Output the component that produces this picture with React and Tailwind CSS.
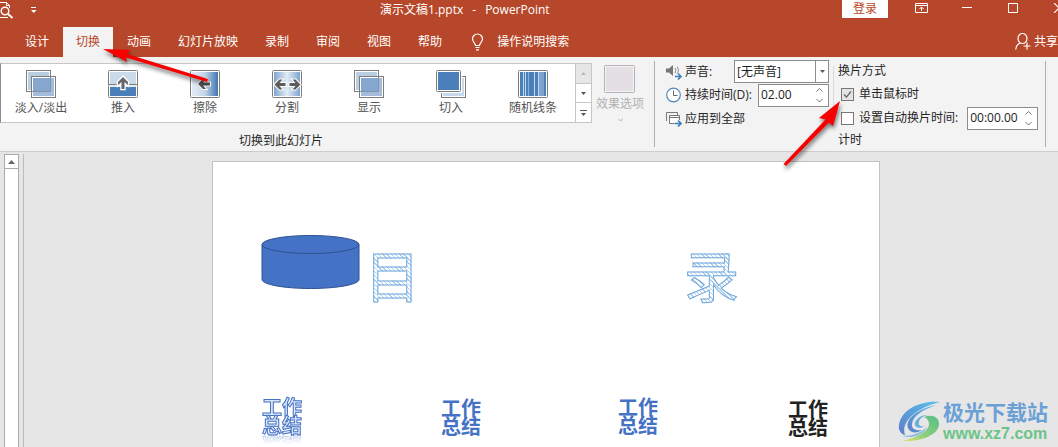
import React from "react";

const tabs = ["设计", "切换", "动画", "幻灯片放映", "录制", "审阅", "视图", "帮助"];

function Frame({ x = 1, fill = "#c9daea", children }) {
  return (
    <svg width="32" height="29" viewBox="0 0 32 29" aria-hidden="true">
      <rect x={x + 0.5} y="0.5" width="29" height="27" rx="1" fill="#fff" stroke="#7c7c7c" />
      <rect x={x + 2} y="2" width="26" height="24" fill={fill} />
      {children}
    </svg>
  );
}

function Overlap() {
  return (
    <svg width="32" height="29" viewBox="0 0 32 29" aria-hidden="true">
      <rect x="1.5" y="0.5" width="24" height="21" fill="#fff" stroke="#7c7c7c" />
      <rect x="3" y="2" width="21" height="18" fill="#b9cfe0" />
      <rect x="6.500" y="6.500" width="24" height="21" fill="#fff" stroke="#7c7c7c" />
      <rect x="8" y="8" width="21" height="18" fill="#a3bcdb" />
      <rect x="8" y="8" width="17" height="13" fill="#86a8ce" />
      <path d="M25.500 7V21.500H7" fill="none" stroke="#7f93ab" />
    </svg>
  );
}

function Push() {
  return (
    <Frame>
      <rect x="3" y="17" width="26" height="9" fill="#4a7fb9" />
      <path d="M1.500 14.500h29" stroke="#7c7c7c" />
      <path d="M1.500 16h29" stroke="#fff" />
      <path d="M16 7l5 5v3l-3.500-3v7h-3v-7l-3.500 3v-3z" fill="#666" stroke="#fff" strokeWidth="2.500" paintOrder="stroke" />
    </Frame>
  );
}

function Wipe() {
  return (
    <Frame fill="url(#wipe)">
      <defs>
        <linearGradient id="wipe">
          <stop offset="0.1" stopColor="#dfe8f3" />
          <stop offset="0.5" stopColor="#c3d4e8" />
          <stop offset="1" stopColor="#3f75b3" />
        </linearGradient>
      </defs>
      <path d="M9 14l5-5h3l-3 3.500h7v3h-7l3 3.500h-3z" fill="#555" stroke="#fff" strokeWidth="2" paintOrder="stroke" />
    </Frame>
  );
}

function Split() {
  return (
    <Frame fill="url(#split)">
      <defs>
        <linearGradient id="split">
          <stop offset="0" stopColor="#7ea5d0" />
          <stop offset="0.5" stopColor="#e3ecf5" />
          <stop offset="1" stopColor="#7ea5d0" />
        </linearGradient>
      </defs>
      <g fill="#5c5c5c" stroke="#fff" strokeWidth="2" paintOrder="stroke">
        <path d="M3.500 14.500l5-5h3l-3 3.500h6v3h-6l3 3.500h-3z" />
        <path d="M29.500 14.500l-5-5h-3l3 3.500h-6v3h6l-3 3.500h3z" />
      </g>
    </Frame>
  );
}

function Cut() {
  return (
    <svg width="32" height="29" viewBox="0 0 32 29" aria-hidden="true">
      <rect x="6.500" y="6.500" width="24" height="21" fill="#fff" stroke="#7c7c7c" />
      <rect x="8" y="8" width="21" height="18" fill="#c9d9ed" />
      <rect x="0" y="0" width="27" height="23" fill="#fff" />
      <rect x="1.500" y="0.500" width="24" height="21" rx="1" fill="#fff" stroke="#7c7c7c" />
      <rect x="3" y="2" width="21" height="18" fill="#4a7fb9" />
    </svg>
  );
}

function Bars() {
  return (
    <Frame fill="#4a7fb9">
      <path d="M6.500 2v24M8.500 2v24M17.500 2v24M21.500 2v24" stroke="#c5d7ea" />
      <path d="M11.500 2v24" stroke="#8db0d6" />
      <rect x="22" y="2" width="5" height="24" fill="#7da4cf" />
    </Frame>
  );
}

const effects = [
  ["淡入/淡出", Overlap],
  ["推入", Push],
  ["擦除", Wipe],
  ["分割", Split],
  ["显示", Overlap],
  ["切入", Cut],
  ["随机线条", Bars],
];

function Spin({ id, value, label }) {
  return (
    <div className="flex h-[23px] w-[71px] items-center border border-[#8c8c8c] bg-white pr-1">
      <input id={id} aria-label={label} defaultValue={value} className="w-0 min-w-0 flex-1 bg-transparent pl-[2px] text-xs text-[#222] outline-none" />
      <svg width="9" height="17" viewBox="0 0 9 17" fill="none" stroke="#777" aria-hidden="true">
        <path d="M1.500 4.500l3-3 3 3M1.500 12l3 3 3-3" />
      </svg>
    </div>
  );
}

function TitleBar() {
  return (
    <header className="flex h-[27px] items-start overflow-hidden text-white">
      <div className="flex w-[380px] shrink-0 items-start">
        <button aria-label="打印预览" className="h-5 w-[14px]">
          <svg width="14" height="20" viewBox="0 0 14 20" fill="none" stroke="#fff">
            <path d="M0 2.500h6.500l3 3V8M6.500 2.500v3h3M0 17.500h8" />
            <circle cx="5" cy="11" r="3.800" strokeWidth="1.500" />
            <path d="M8 14l4.500 4" strokeWidth="2" />
          </svg>
        </button>
        <button aria-label="自定义快速访问工具栏" className="ml-4 h-5 w-2">
          <svg width="8" height="20" viewBox="0 0 8 20">
            <path d="M1 7.500h5" stroke="#fff" />
            <path d="M1 10h5.500l-2.750 3z" fill="#fff" />
          </svg>
        </button>
      </div>
      <h1 className="flex shrink-0 gap-[9px] pt-[1px] text-xs leading-[18px]">
        <span>演示文稿1.pptx</span>
        <span>-</span>
        <span>PowerPoint</span>
      </h1>
      <div className="-mr-6 ml-auto flex shrink-0 items-start">
        <button className="mr-[10px] h-[18px] w-[46px] bg-white text-xs leading-[16px] text-[#b7472a]">登录</button>
        <button aria-label="功能区显示选项" className="flex w-[46px] justify-center pt-[3px]">
          <svg width="13" height="10" viewBox="0 0 13 10" fill="none" stroke="#fff">
            <path d="M.5.5h12v9H.5zM.5 2.500h12M6.500 8V4M4.500 6l2-2 2 2" />
          </svg>
        </button>
        <button aria-label="最小化" className="flex w-[46px] justify-center pt-[7px]">
          <svg width="10" height="1"><path d="M0 .5h10" stroke="#fff" /></svg>
        </button>
        <button aria-label="最大化" className="flex w-[46px] justify-center pt-[3px]">
          <svg width="10" height="10"><path d="M.5.5h9v9h-9z" fill="none" stroke="#fff" /></svg>
        </button>
        <button aria-label="关闭" className="flex w-[46px] justify-center pt-[3px]">
          <svg width="10" height="10"><path d="M0 0l10 10M10 0L0 10" stroke="#fff" strokeWidth="1.200" /></svg>
        </button>
      </div>
    </header>
  );
}

function TabBar() {
  return (
    <nav className="flex h-[30px] overflow-hidden pl-3 text-xs text-white">
      <div className="flex shrink-0 gap-px">
        {tabs.map((t) => (
          <button key={t} className={t === "切换" ? "bg-[#f3f3f3] px-[13px] pb-px text-[#b7472a]" : "px-[13px] pb-px"}>
            {t}
          </button>
        ))}
      </div>
      <button className="ml-4 flex shrink-0 items-center gap-[13px] pb-px">
        <svg width="13" height="18" viewBox="0 0 13 18" fill="none" stroke="#fff" strokeWidth="1.200">
          <path d="M4.500 12.500c0-2.500-3-3.500-3-6.500a5 5 0 0 1 10 0c0 3-3 4-3 6.500zM4.500 14.500h4M5 16.800h3" />
        </svg>
        <span>操作说明搜索</span>
      </button>
      <button className="ml-auto flex shrink-0 items-center gap-[3px] pb-px">
        <svg width="16" height="17" viewBox="0 0 16 17" fill="none" stroke="#fff" strokeWidth="1.200">
          <ellipse cx="7.500" cy="5.500" rx="4.500" ry="5" />
          <path d="M5 10c-2.500 1-4 3.500-4.300 6.500M12 9.500v7M8.500 13h7" />
        </svg>
        <span>共享</span>
      </button>
    </nav>
  );
}

function TransitionGroup() {
  return (
    <section className="flex w-[654px] shrink-0 flex-col">
      <div className="flex pt-[6px]">
        <div className="flex h-[60px] border border-[#c6c6c6] border-l-[#8a8a8a] bg-white">
          {effects.map(([name, Icon]) => (
            <button key={name} className="flex w-[82px] flex-col items-center pr-[2px] pt-[6px] text-xs text-[#555]">
              <Icon />
              <span className="leading-[18px]">{name}</span>
            </button>
          ))}
          <div className="flex w-4 flex-col border-l border-[#c6c6c6]">
            <button aria-label="上一行" className="flex flex-1 items-center justify-center bg-[#e6e6e6]">
              <svg width="5" height="3"><path d="M0 3h5L2.500 0z" fill="#b9b9b9" /></svg>
            </button>
            <button aria-label="下一行" className="flex flex-1 items-center justify-center border-y border-[#c6c6c6]">
              <svg width="5" height="3"><path d="M0 0h5L2.500 3z" fill="#555" /></svg>
            </button>
            <button aria-label="其他" className="flex flex-1 items-center justify-center">
              <svg width="7" height="6"><path d="M0 .5h7" stroke="#555" /><path d="M1 3h5L3.500 6z" fill="#555" /></svg>
            </button>
          </div>
        </div>
        <button disabled className="flex w-14 flex-col items-center pt-[2px] text-xs text-[#b1b1b1]">
          <svg width="32" height="29" viewBox="0 0 32 29" aria-hidden="true">
            <rect x="0.500" y="0.500" width="30" height="27" rx="1" fill="#f6f3f6" stroke="#b5b0b5" />
            <rect x="2" y="2" width="27" height="24" fill="#e3dfe3" />
          </svg>
          <span className="leading-5">效果选项</span>
          <svg width="5" height="4" className="mt-1"><path d="M0 .5l2.500 2.500L5 .5" fill="none" stroke="#b1b1b1" /></svg>
        </button>
      </div>
      <h2 className="mt-[9px] pl-[239px] text-xs leading-[18px]">切换到此幻灯片</h2>
    </section>
  );
}

function TimingGroup() {
  return (
    <section className="my-1 flex w-[392px] shrink-0 border-x border-[#b0b0b0] pl-[11px] text-xs">
      <div className="-mt-px flex w-[163px] flex-col">
        <div className="flex h-[23px] items-center">
          <svg width="17" height="16" viewBox="0 0 17 16" className="mr-[2px]" aria-hidden="true">
            <path d="M0 4.500h3L7 1v11L3 8.500H0z" fill="#777" />
            <path d="M9 4c1 1.500 1 3.500 0 5M11 2.500c1.800 2.500 1.800 5.500 0 7" fill="none" stroke="#888" />
            <path d="M9 12.500h5.500M12 9.500l3 3-3 3" fill="none" stroke="#3f7dbb" strokeWidth="1.600" />
          </svg>
          <label htmlFor="sound">声音:</label>
          <div className="relative ml-auto h-[23px] w-[95px]">
            <select id="sound" className="h-full w-full appearance-none border border-[#8c8c8c] bg-white pl-[2px] text-xs text-[#222]">
              <option>[无声音]</option>
            </select>
            <span className="pointer-events-none absolute inset-y-0 right-0 flex w-[14px] items-center justify-center border-l border-[#8c8c8c]">
              <svg width="5" height="3"><path d="M0 0h5L2.500 3z" fill="#555" /></svg>
            </span>
          </div>
        </div>
        <div className="flex h-6 items-center">
          <svg width="16" height="16" viewBox="0 0 16 16" fill="#fff" className="mr-[3px]" aria-hidden="true">
            <circle cx="7.500" cy="8" r="6.800" stroke="#4f86bd" strokeWidth="1.200" />
            <path d="M7.500 3.500v5h4" fill="none" stroke="#666" />
          </svg>
          <label htmlFor="duration">持续时间(D):</label>
          <div className="ml-auto"><Spin id="duration" value="02.00" /></div>
        </div>
        <button className="flex h-[23px] items-center">
          <svg width="16" height="16" viewBox="0 0 16 16" className="mr-[3px]" aria-hidden="true">
            <path d="M.5 10V1.500h11V4" fill="none" stroke="#777" />
            <path d="M8 12.500H3.500v-8h10V9" fill="#fff" stroke="#777" />
            <path d="M3.500 6.500h10" stroke="#777" />
            <path d="M8.500 12.500h6M12 9.500l3 3-3 3" fill="none" stroke="#3f7dbb" strokeWidth="1.600" />
          </svg>
          应用到全部
        </button>
      </div>
      <div className="mb-6 ml-1 mt-[5px] w-px bg-[#dadada]" />
      <div className="ml-1 flex flex-col">
        <h3 className="h-[21px] shrink-0 leading-[20px]">换片方式</h3>
        <div className="flex h-6 shrink-0 items-center pl-[3px]">
          <input id="click" type="checkbox" defaultChecked className="peer h-[13px] w-[13px] appearance-none border border-[#777] bg-[#e4e4e4]" />
          <svg width="13" height="13" className="pointer-events-none -ml-[13px] hidden peer-checked:block" aria-hidden="true">
            <path d="M3 6.500l2.500 2.500L10 3.500" fill="none" stroke="#666" strokeWidth="1.200" />
          </svg>
          <label htmlFor="click" className="pl-[5px]">单击鼠标时</label>
        </div>
        <div className="flex h-6 shrink-0 items-center pl-[3px]">
          <input id="auto" type="checkbox" className="h-[13px] w-[13px] appearance-none border border-[#777] bg-white" />
          <label htmlFor="auto" className="pl-[5px] pr-[9px]">设置自动换片时间:</label>
          <Spin id="autotime" value="00:00.00" label="自动换片时间" />
        </div>
        <h2 className="mt-px shrink-0 leading-[18px]">计时</h2>
      </div>
    </section>
  );
}

const hatch =
  "bg-[repeating-linear-gradient(45deg,#fff_0px,#fff_2px,#aed0ee_2px,#aed0ee_3px)] bg-clip-text text-transparent [-webkit-text-stroke:1px_#6fa8dc]";

function Slide() {
  return (
    <main className="relative w-[668px] shrink-0 border border-b-0 border-[#c3c3c3] bg-white">
      <svg className="absolute left-[48px] top-[72px]" width="100" height="57" viewBox="0 0 100 57" fill="#4472c4" stroke="#2f528f">
        <path d="M1 10.500v35c0 5 22 9 48.500 9s48.500-4 48.500-9v-35" />
        <ellipse cx="49.500" cy="10.500" rx="48.500" ry="9" />
      </svg>
      <p className={`absolute left-[152px] top-[82px] text-[55px] leading-[64px] ${hatch}`}>目</p>
      <p className={`absolute left-[471px] top-[82px] text-[55px] leading-[64px] ${hatch}`}>录</p>
      <p className="absolute left-[49px] top-[237px] w-[42px] text-[20px] font-bold leading-[18px] text-[#dbe6f6] [-webkit-box-reflect:below_0px_linear-gradient(transparent_75%,rgba(0,0,0,0.4))] [-webkit-text-stroke:1px_#4472c4]">工作总结</p>
      <p className="absolute left-[228px] top-[238px] w-[42px] text-[20px] font-bold leading-[18px] text-[#4472c4]">工作总结</p>
      <p className="absolute left-[405px] top-[237px] w-[42px] text-[20px] font-bold leading-[18px] text-[#4472c4]">工作总结</p>
      <p className="absolute left-[575px] top-[239px] w-[42px] text-[20px] font-bold leading-[18px] text-[#222]">工作总结</p>
    </main>
  );
}

function Watermark() {
  return (
    <div className="absolute bottom-[4px] right-[10px] flex items-center gap-[2px]">
      <svg width="43" height="42" viewBox="0 0 43 42" aria-hidden="true">
        <defs>
          <linearGradient id="wa" x1="1" y1="0" x2="0" y2="1">
            <stop offset="0" stopColor="#5cc0ea" />
            <stop offset="1" stopColor="#5a7fcb" />
          </linearGradient>
          <linearGradient id="wb" x1="1" y1="0" x2="0" y2="1">
            <stop offset="0" stopColor="#55bd86" />
            <stop offset="0.600" stopColor="#8fcf7c" />
            <stop offset="1" stopColor="#e4e65e" />
          </linearGradient>
        </defs>
        <path d="M42 1C22-1 3 9 1 24c-1 5 2 9 6 10C3 23 14 8 42 1z" fill="url(#wa)" />
        <path d="M38 4C19 8 7 18 10 27c2 5 9 6 14 2-6 1-11-1-10-6C15 15 24 9 38 4z" fill="url(#wa)" />
        <path d="M30 14c-8 0-14 5-13 10 1 3 6 4 9 1-4 1-6-1-5-4 0-3 4-6 9-7z" fill="#6baedb" />
        <path d="M26 16c8-3 15 0 15 7 0 10-16 18-37 17 14-3 26-9 27-16 0-4-1-6-5-8z" fill="url(#wb)" />
        <path d="M4 35c10 0 19-3 25-9-3 7-12 12-25 9z" fill="#8bbfd9" />
      </svg>
      <div>
        <div className="text-[21px] font-bold leading-[24px] text-[#6aa0d6]">极光下载站</div>
        <div className="font-['Liberation_Sans'] text-[16px] font-bold leading-[19px] text-[#6cc488]">www.xz7.com</div>
      </div>
    </div>
  );
}

function Arrows() {
  return (
    <svg className="pointer-events-none absolute left-0 top-0 overflow-visible drop-shadow-[1px_3px_2px_rgba(0,0,0,0.55)]" width="860" height="180" fill="#f80000" aria-hidden="true">
      <path d="M103 49L130 50L127 54L208 79L207 82L126 57.500L127 62Z" />
      <path d="M840 101L833 126L829 122.500L786 166L783.500 164L825.500 119.500L819 118Z" />
    </svg>
  );
}

export default function App() {
  return (
    <div className="relative flex min-h-screen flex-col overflow-hidden bg-[#e6e6e6] font-['Open_Sans','Noto_Sans_CJK_SC',sans-serif] text-[#262626]">
      <div className="bg-[#b7472a]">
        <TitleBar />
        <TabBar />
      </div>
      <div className="flex h-[95px] border-b border-[#cdcdcd] bg-[#f3f3f3]">
        <TransitionGroup />
        <TimingGroup />
      </div>
      <div className="flex flex-1">
        <div className="ml-1 mt-[2px] flex w-[15px] flex-col border border-b-0 border-[#ababab] bg-white">
          <button aria-label="向上滚动" className="flex h-[14px] items-center justify-center border-b border-[#ababab]">
            <svg width="7" height="4"><path d="M0 4h7L3.500 0z" fill="#666" /></svg>
          </button>
        </div>
        <div className="ml-1 mt-[2px] w-px bg-[#bcbcbc]" />
        <div className="flex flex-1 justify-center pl-[10px] pt-[9px]">
          <Slide />
        </div>
      </div>
      <Watermark />
      <Arrows />
    </div>
  );
}
